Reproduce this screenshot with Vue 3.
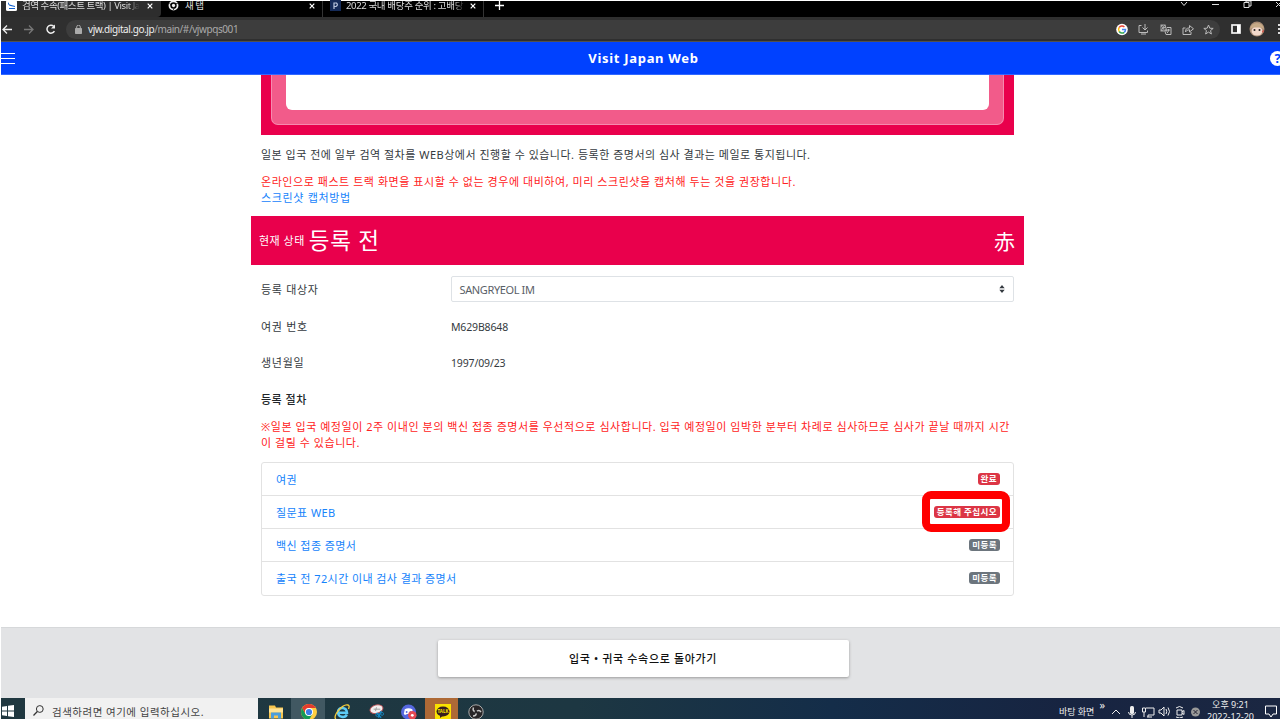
<template>
  <div class="screen">
    <header class="tabs">
      <div class="tab active">
        <svg class="favicon" viewBox="0 0 11 11"><rect width="11" height="11" rx="1.5" fill="#fff" /><path d="M2 2l1.500 2.500L9 6v1L3.500 5.800 2 4zM3 8h6v1H3z" fill="#1261ce" /></svg>
        <span class="tab-title first-title">검역 수속(패스트 트랙) | Visit Ja</span>
        <svg class="close" viewBox="0 0 6 6"><path d="M.7.7l4.600 4.600M5.300.7L.7 5.300" /></svg>
      </div>
      <div class="tab second">
        <svg class="favicon" viewBox="0 0 10 10"><circle cx="5" cy="5" r="3.700" fill="none" stroke="#eee" stroke-width="1.600" /><circle cx="5" cy="5" r="1.500" fill="#eee" /><path d="M5 3.200h4M3.500 6L1.400 2.800M6.500 6L4.600 9.400" stroke="#111" stroke-width=".7" /></svg>
        <span class="tab-title new-title">새 탭</span>
        <svg class="close" viewBox="0 0 6 6"><path d="M.7.7l4.600 4.600M5.300.7L.7 5.300" /></svg>
      </div>
      <div class="tab third">
        <svg class="favicon" viewBox="0 0 11 11"><rect width="11" height="11" fill="#152b59" /><path d="M4 9V3h2.500q2 2-.5 3.500H4" fill="none" stroke="#bac6de" stroke-width="1.200" /></svg>
        <span class="tab-title third-title">2022 국내 배당주 순위 : 고배당</span>
        <svg class="close" viewBox="0 0 6 6"><path d="M.7.7l4.600 4.600M5.300.7L.7 5.300" /></svg>
      </div>
      <svg class="plus" viewBox="0 0 9 9"><path d="M4.500 0v9M0 4.500h9" stroke="#fff" stroke-width="1.300" /></svg>
      <svg class="window-controls" viewBox="0 0 100 16"><path d="M1 1l3 3.500L7 1M32 3.500h7M64 1.500h5v5h-5zM66 1V0h5v5h-2M96 1l5 5M101 1l-5 5" fill="none" stroke="#ddd" stroke-width="1" /></svg>
    </header>

    <div class="toolbar">
      <svg class="nav-icons" viewBox="0 0 58 24">
        <g fill="none" stroke-width="1.300">
          <path d="M11 12.500H2M6 8.500l-4 4 4 4" stroke="#eee" />
          <path d="M23 12.500h9M28 8.500l4 4-4 4" stroke="#777" />
          <path d="M52.700 9.200a4 4 0 1 0 .7 5" stroke="#eee" stroke-width="1.500" />
        </g>
        <path d="M54 7.500v4h-4z" fill="#eee" />
      </svg>
      <div class="address">
        <svg class="lock" viewBox="0 0 7 9"><rect y="3" width="7" height="6" rx=".7" fill="#aaa" /><path d="M1.700 3V2a1.800 1.800 0 0 1 3.600 0v1" fill="none" stroke="#aaa" /></svg>
        <span class="url">vjw.digital.go.jp<i>/main/#/vjwpqs001</i></span>
        <svg class="actions" viewBox="0 0 104 24">
          <circle cx="8" cy="12.500" r="5.800" fill="#fff" />
          <g fill="none" stroke-width="1.500">
            <path d="M5.200 10.500a3.500 3.500 0 0 1 5.200-.5" stroke="#ea4335" />
            <path d="M5.200 10.500a3.500 3.500 0 0 0 0 4" stroke="#fbbc05" />
            <path d="M5.200 14.500a3.500 3.500 0 0 0 5 .8" stroke="#34a853" />
            <path d="M8 12.500h3.500a3.300 3.300 0 0 1-1.300 2.800" stroke="#4285f4" />
          </g>
          <g fill="none" stroke="#bbb" stroke-width="1">
            <path d="M27.500 8.500H25v7h8.500v-2M27 17h5M31 7v5.500M28.500 10.500L31 13l2.500-2.500" />
            <path d="M53 10.500h4v7h-5l-1-3M53 13h3M54.500 12v1q0 2-1.500 3" />
            <path d="M71.500 11H69v6.500h8V15M71.500 15c0-3 1-4 4-4V8.500l4 3.300-4 3.200v-2.300q-3 0-4 2.300z" />
            <path d="M94.500 8l1.300 3.200 3.400.2-2.700 2.200.9 3.400-2.900-1.900-2.900 1.900.9-3.400-2.700-2.200 3.400-.2z" />
          </g>
          <path d="M46.500 7.500h5l2 7h-7z" fill="#aaa" />
          <path d="M51 9.800a2 2 0 1 0 .4 1.700h-1.600" fill="none" stroke="#444" stroke-width=".8" />
        </svg>
      </div>
      <svg class="profile" viewBox="0 0 50 24">
        <rect x="2" y="8" width="8" height="8" fill="none" stroke="#f4f4f4" stroke-width="1.700" /><rect x="7" y="8" width="3" height="8" fill="#fff" />
        <circle cx="27" cy="12" r="7.500" fill="#a98c74" />
        <ellipse cx="27" cy="14" rx="5.500" ry="4.500" fill="#f3d9cb" />
        <path d="M20 12q1-6 7-6t7 6l-3-1.500-8 0z" fill="#c6aa87" />
        <circle cx="24.500" cy="13" r="1" fill="#222" /><circle cx="29.500" cy="13" r="1" fill="#222" /><path d="M32 14l2-1-1 3z" fill="#d83b35" />
        <path d="M48 7h2v2h-2zM48 11h2v2h-2zM48 15h2v2h-2z" fill="#ddd" />
      </svg>
    </div>

    <div class="app-bar">
      <div class="burger"><b></b><b></b><b></b></div>
      <h1>Visit Japan Web</h1>
      <span class="help">?</span>
    </div>

    <main>
      <div class="frame"><div class="frame-inner"><div class="frame-white"></div></div></div>
      <p class="intro">일본 입국 전에 일부 검역 절차를 WEB상에서 진행할 수 있습니다. 등록한 증명서의 심사 결과는 메일로 통지됩니다.</p>
      <p class="warn">온라인으로 패스트 트랙 화면을 표시할 수 없는 경우에 대비하여, 미리 스크린샷을 캡처해 두는 것을 권장합니다.</p>
      <a class="capture">스크린샷 캡처방법</a>
      <section class="status">
        <span>현재 상태</span><strong>등록 전</strong><em>赤</em>
      </section>
      <div class="field">
        <label>등록 대상자</label>
        <div class="select"><span>SANGRYEOL IM</span><svg viewBox="0 0 6 8"><path d="M3 0l2.700 3.300H.3zM3 8L.3 4.700h5.400z" fill="#343a40" /></svg></div>
      </div>
      <div class="field"><label>여권 번호</label><span class="value">M629B8648</span></div>
      <div class="field"><label>생년월일</label><span class="value">1997/09/23</span></div>
      <h2>등록 절차</h2>
      <p class="note">※일본 입국 예정일이 2주 이내인 분의 백신 접종 증명서를 우선적으로 심사합니다. 입국 예정일이 임박한 분부터 차례로 심사하므로 심사가 끝날 때까지 시간<br />이 걸릴 수 있습니다.</p>
      <ul class="procedures">
        <li v-for="item in procedures" :key="item.name">
          <a>{{ item.name }}</a>
          <span class="badge" :class="{ danger: item.danger, marked: item.marked }">{{ item.status }}</span>
        </li>
      </ul>
    </main>

    <footer><button>입국 • 귀국 수속으로 돌아가기</button></footer>

    <div class="taskbar">
      <div class="start"><svg viewBox="0 0 12 12"><path d="M0 1.700l5-.7v4.500H0zM6 .8L12 0v5.500H6zM0 6.500h5V11l-5-.7zM6 6.500h6V12l-6-.8z" fill="#fff" /></svg></div>
      <div class="search">
        <svg viewBox="0 0 11 11"><circle cx="6.800" cy="4" r="3.400" fill="none" stroke="#333" /><path d="M4.300 6.500L.5 10.500" stroke="#333" stroke-width="1.200" /></svg>
        <span>검색하려면 여기에 입력하십시오.</span>
      </div>
      <div class="apps">
        <div class="app"><svg viewBox="0 0 16 15"><path d="M1 1h6l1 2h7v11H1z" fill="#f8c64e" /><path d="M1 4h14v4H1z" fill="#ffe394" /><path d="M3 8h10v6h-3v-3H6v3H3z" fill="#4b9edb" /></svg></div>
        <div class="app open"><svg viewBox="0 0 16 16"><circle cx="8" cy="8" r="8" fill="#ffcd40" /><path d="M1.100 4A8 8 0 0 1 15 4H8a4 4 0 0 0-3.500 6z" fill="#e33b2e" /><path d="M1.100 4A8 8 0 0 0 8 16l3.500-6h-7z" fill="#149958" /><circle cx="8" cy="8" r="4" fill="#fff" /><circle cx="8" cy="8" r="3.100" fill="#3b7de9" /></svg></div>
        <div class="app"><svg viewBox="0 0 16 16"><path d="M12.800 10.500c-1.800 4-8.800 3-8.800-2.500s8.500-5.500 9 .8H4.500" fill="none" stroke="#5ecbf5" stroke-width="2.500" /><path d="M2 15C-2 13 8-.5 14 1q2 .5.5 4" fill="none" stroke="#f7cd39" stroke-width="1.300" /></svg></div>
        <div class="app"><svg viewBox="0 0 17 16"><ellipse cx="9" cy="5" rx="7" ry="4.500" transform="rotate(-15 9 5)" fill="#f3efef" stroke="#b75156" /><path d="M6 5h7M9 3l-1 4" stroke="#999" /><path d="M9 9l5 5M14 7l-3 7" stroke="#1686c1" stroke-width="1.500" /><circle cx="10" cy="11" r="1.700" fill="none" stroke="#1686c1" /><circle cx="15" cy="10" r="1.500" fill="none" stroke="#1686c1" /></svg></div>
        <div class="app"><svg viewBox="0 0 17 16"><circle cx="8" cy="8" r="8" fill="#5668df" /><path d="M4 5q4-2 8 0l1 5q-2 2-3 0H6q-1 2-3 0z" fill="#fff" /><circle cx="6" cy="8" r="1" fill="#5668df" /><circle cx="10" cy="8" r="1" fill="#5668df" /><circle cx="12" cy="11.500" r="4.500" fill="#e54952" /><circle cx="12" cy="11.500" r="1.500" fill="#fff" /></svg></div>
        <div class="app talk"><svg viewBox="0 0 16 16"><path d="M0 0h16v16H0z" fill="#fae100" /><ellipse cx="8" cy="7.500" rx="6.500" ry="5" fill="#371d1e" /><path d="M5 11v3l4-3" fill="#371d1e" /><text x="8" y="9.200" text-anchor="middle" font-size="4.500" font-weight="bold" fill="#fae100">TALK</text></svg></div>
        <div class="app"><svg viewBox="0 0 16 16"><circle cx="8" cy="8" r="7.200" fill="#272527" stroke="#aaa" /><path d="M8 8q-4-1-2.500-4.500M8 8q3-3 5 0M8 8q1 4-3 4" stroke="#ccc" stroke-width="1.500" fill="none" /><circle cx="8" cy="8" r="1.500" fill="#272527" /></svg></div>
      </div>
      <div class="tray">
        <span class="desktop">바탕 화면</span><span class="more">»</span>
        <svg viewBox="0 0 90 20">
          <g fill="none" stroke="#eee" stroke-width="1">
            <path d="M1 16l4-4 4 4M17.500 14q0 3 3.500 3t3.500-3M21 17v3M35 10h8v7h-6v2M31.500 10h3v4h-3zM33 14v5M36 19h5" />
            <path d="M48 12h2l3-3v9l-3-3h-2zM55 11q1.500 2.500 0 5M57 9.500q3 4 0 8" />
            <path d="M66 12h5v5h-5zM71 14l2-1.500v4L71 15M65 10q3.500-3 7 0M65 19q3.500 2 7 0" />
          </g>
          <rect x="19" y="8" width="4" height="8" rx="1.500" fill="#eee" />
          <circle cx="84.500" cy="14" r="4.500" fill="#999" /><path d="M82.500 12l4 4m0-4l-4 4" stroke="#223" />
        </svg>
        <div class="clock"><span>오후 9:21</span><span>2022-12-20</span></div>
        <svg class="message" viewBox="0 0 12 13"><path d="M.5 1h11v8H8l-2 3-2-3H.5z" fill="none" stroke="#fff" /></svg>
      </div>
    </div>
  </div>
</template>

<script setup>
// 등록 절차 목록
const procedures = [
  { name: '여권', status: '완료', danger: true },
  { name: '질문표 WEB', status: '등록해 주십시오', danger: true, marked: true },
  { name: '백신 접종 증명서', status: '미등록' },
  { name: '출국 전 72시간 이내 검사 결과 증명서', status: '미등록' }
]
</script>

<style>
body {
  background: #fff;
}
</style>

<style scoped>
* {
  box-sizing: border-box;
}

.screen {
  width: 1280px;
  height: 720px;
  padding: 1px 0 1px 1px;
  display: flex;
  flex-direction: column;
  overflow: hidden;
  font-family: 'Noto Sans', 'Noto Sans CJK KR', sans-serif;
  font-size: 11px;
  color: #343a40;
  white-space: nowrap;
}

svg {
  display: block;
  flex: none;
}

.tabs {
  height: 16px;
  display: flex;
  background: #000;
  color: #ddd;
}

.tab {
  height: 16px;
  display: flex;
  align-items: center;
  padding-bottom: 7px;
}

.active {
  width: 160px;
  background: #2d2d2d;
  padding-left: 5px;
  border-bottom-right-radius: 4px;
}

.second {
  width: 162px;
  padding-left: 7px;
  border-right: 1px solid #333;
}

.third {
  width: 161px;
  padding-left: 7px;
  border-right: 1px solid #333;
}

.favicon {
  width: 11px;
  height: 11px;
}

.tab-title {
  font-size: 9.5px;
  line-height: 12px;
  margin-left: 6px;
}

.first-title {
  width: 118px;
  margin-left: 5px;
  letter-spacing: -0.45px;
  mask-image: linear-gradient(90deg, #000 88%, transparent);
}

.new-title {
  letter-spacing: -0.5px;
}

.third-title {
  width: 119px;
  margin-left: 5px;
  letter-spacing: -0.35px;
  mask-image: linear-gradient(90deg, #000 90%, transparent);
}

.close {
  width: 6px;
  height: 6px;
  margin-left: auto;
  margin-right: 7px;
  stroke: #fff;
  stroke-width: 1.2;
}

.active .close {
  margin-right: 8px;
}

.plus {
  width: 9px;
  height: 9px;
  margin-left: 11px;
}

.window-controls {
  width: 100px;
  height: 16px;
  margin-left: auto;
}

.toolbar {
  height: 25px;
  background: #2f2f2f;
  border-bottom: 1px solid #52504e;
  display: flex;
}

.nav-icons {
  width: 58px;
  height: 24px;
}

.address {
  width: 1155px;
  height: 19px;
  margin: 3px 0 0 7px;
  background: #3d3d3d;
  border-radius: 10px;
  display: flex;
  align-items: center;
}

.lock {
  width: 7px;
  height: 9px;
  margin-left: 9px;
}

.url {
  margin: -1px 0 0 6px;
  font-size: 10px;
  letter-spacing: -0.42px;
  color: #eee;
}

.url i {
  font-style: normal;
  color: #aaa;
}

.actions {
  width: 104px;
  height: 24px;
  margin: -1px 2px 0 auto;
}

.profile {
  width: 50px;
  height: 24px;
  margin-left: 10px;
}

.app-bar {
  height: 33px;
  flex: none;
  background: #0041ff;
  color: #fff;
  display: flex;
  align-items: center;
  justify-content: space-between;
  border-bottom: 1px solid #3268ff;
}

.burger {
  width: 14px;
  display: grid;
  gap: 4px;
}

.burger b {
  height: 1px;
  background: #fff;
}

h1 {
  font-size: 13px;
  margin: 0 0 0 2px;
  letter-spacing: 0.7px;
}

.help {
  width: 15px;
  height: 15px;
  margin-right: -5px;
  border-radius: 50%;
  background: #fff;
  color: #0041ff;
  font-size: 13px;
  font-weight: bold;
  line-height: 15px;
  text-align: center;
}

main {
  width: 753px;
  height: 552px;
  flex: none;
  margin-left: 260px;
  letter-spacing: 0.5px;
}

p,
h2 {
  margin: 0;
  line-height: 16px;
}

.frame {
  height: 60px;
  background: #e9004c;
  padding: 0 10px 10px;
}

.frame-inner {
  height: 50px;
  border: 1px solid #f68aae;
  border-top: 0;
  border-radius: 0 0 7px 7px;
  background: #f25b8a;
  padding: 0 14px 14px;
}

.frame-white {
  height: 35px;
  background: #fff;
  border-radius: 0 0 6px 6px;
}

.intro {
  margin-top: 12px;
}

.warn {
  color: #f22;
  margin-top: 11px;
  letter-spacing: 0.55px;
}

.capture {
  display: block;
  line-height: 16px;
  color: #1683fb;
  letter-spacing: 0.67px;
}

.status {
  width: 773px;
  height: 49px;
  margin: 10.4px 0 10.6px -10px;
  padding: 0 9px 2px 8px;
  background: #e9004c;
  color: #fff;
  display: flex;
  align-items: center;
}

.status strong {
  margin-left: 4px;
  font-size: 22.5px;
  font-weight: 400;
  letter-spacing: 0.7px;
}

.status em {
  margin-left: auto;
  font: 400 21px 'Noto Sans CJK JP', sans-serif;
  letter-spacing: 0;
}

.field {
  height: 36.7px;
  display: flex;
}

.field label {
  width: 190px;
  line-height: 28px;
  letter-spacing: 0.7px;
}

.value {
  line-height: 28px;
  font-size: 10.5px;
  letter-spacing: -0.15px;
}

.select {
  width: 563px;
  height: 26px;
  border: 1px solid #dee2e6;
  border-radius: 2px;
  padding: 1px 8px 0 7.5px;
  color: #596067;
  letter-spacing: -0.38px;
  display: flex;
  align-items: center;
  justify-content: space-between;
}

.select svg {
  width: 6px;
  height: 8px;
}

h2 {
  margin-top: 6px;
  font-size: 11px;
  font-weight: 500;
  color: #212529;
}

.note {
  margin-top: 11px;
  color: #f22;
  letter-spacing: 0.54px;
}

.procedures {
  list-style: none;
  margin: 10.5px 0 0;
  padding: 0;
  border: 1px solid #e2e2e2;
  border-radius: 3px;
}

li {
  height: 33.2px;
  padding: 0 13px 0 14px;
  display: flex;
  align-items: center;
  justify-content: space-between;
  border-bottom: 1px solid #e2e2e2;
}

li:last-child {
  height: 32.4px;
  border: 0;
}

li a {
  color: #1683fb;
  letter-spacing: 0.42px;
}

.badge {
  position: relative;
  height: 12px;
  padding: 0 3px;
  border-radius: 3px;
  background: #6c757d;
  color: #fff;
  font-size: 8.5px;
  font-weight: 700;
  line-height: 12px;
  letter-spacing: 0.4px;
}

.danger {
  background: #dc3545;
}

.marked::after {
  content: '';
  position: absolute;
  box-sizing: border-box;
  width: 88px;
  height: 41px;
  right: -10px;
  top: -14.5px;
  border: 8px solid #f00;
  border-radius: 9px;
}

footer {
  height: 71px;
  flex: none;
  background: #e2e3e5;
  border-top: 1px solid #d6d8da;
  padding: 12px 0 0 436.5px;
}

button {
  display: block;
  width: 411px;
  height: 37px;
  padding: 0 0 1px;
  border: 0;
  border-radius: 2px;
  background: #fff;
  box-shadow: 0 1px 3px #999;
  color: #111;
  font: 500 11px 'Noto Sans', 'Noto Sans CJK KR', sans-serif;
  letter-spacing: 0.65px;
}

.taskbar {
  height: 21px;
  flex: none;
  display: flex;
  overflow: hidden;
  background: linear-gradient(90deg, #203840, #1d3742 45%, #142d49 65%, #172441 83%, #1b2742);
}

.start {
  width: 24px;
  padding: 7px 0 0 1px;
}

.start svg {
  width: 12px;
  height: 12px;
}

.search {
  width: 233px;
  background: #f1f1f1;
  display: flex;
  padding: 7px 0 0 8px;
  color: #444;
}

.search svg {
  width: 11px;
  height: 11px;
}

.search span {
  margin-left: 8px;
  line-height: 14px;
  font-size: 10.5px;
  letter-spacing: 0.5px;
}

.apps {
  display: flex;
}

.app {
  width: 33.4px;
  height: 21px;
  display: flex;
  justify-content: center;
  padding: 6px 0 0 2px;
}

.app svg {
  width: 16px;
  height: 16px;
}

.open {
  background: #415862;
}

.talk {
  background: #ad6936;
}

.tray {
  margin-left: auto;
  display: flex;
  color: #eee;
}

.desktop {
  margin-top: 6px;
  font-size: 9px;
  line-height: 15px;
}

.more {
  margin: 0 6px 0 5px;
  font-size: 11px;
  line-height: 14px;
}

.tray > svg {
  width: 90px;
  height: 20px;
}

.clock {
  width: 49px;
  margin: 1px 0 0 5px;
  display: flex;
  flex-direction: column;
  align-items: center;
  font-size: 9px;
  line-height: 12px;
}

.tray .message {
  width: 12px;
  height: 13px;
  margin: 7px 3px 0 10px;
}
</style>
